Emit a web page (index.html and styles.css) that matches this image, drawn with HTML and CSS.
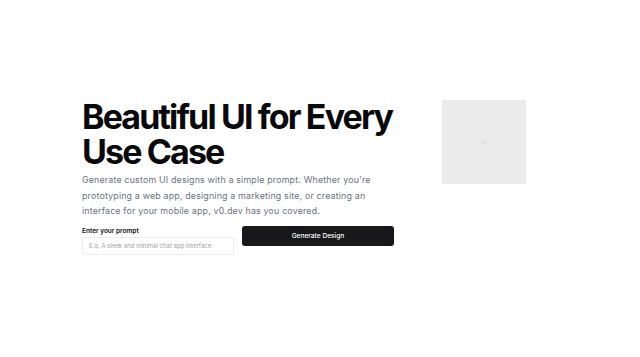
FILE: index.html
```html
<!DOCTYPE html>
<html lang="en">

<head>
    <meta charset="UTF-8">
    <meta name="viewport" content="width=device-width, initial-scale=1.0">
    <title>Beautiful UI for Every Use Case</title>
    <link rel="stylesheet" href="styles.css">
</head>

<body>
    <main class="hero">
        <!-- Texto e formulário -->
        <section class="hero-text">
            <h1>Beautiful UI for Every<br>Use Case</h1>
            <p class="lead">Generate custom UI designs with a simple prompt. Whether you're prototyping a web app, designing a marketing site, or creating an interface for your mobile app, v0.dev has you covered.</p>

            <form class="prompt-form" onsubmit="return false">
                <div class="field">
                    <label for="prompt">Enter your prompt</label>
                    <input type="text" id="prompt" placeholder="E.g. A sleek and minimal chat app interface">
                </div>
                <button type="submit">Generate Design</button>
            </form>
        </section>

        <!-- Imagem de exemplo -->
        <div class="hero-image">
            <div class="placeholder">
                <svg width="8" height="8" viewBox="0 0 8 8" fill="none" stroke="#dcdcdc" stroke-width="1">
                    <circle cx="4" cy="4" r="2"/>
                </svg>
            </div>
        </div>
    </main>
</body>

</html>
```

FILE: styles.css
```css
* {
    box-sizing: border-box;
}

body {
    margin: 0;
    font-family: Inter, "Noto Sans", sans-serif;
    color: #0a0a0a;
    background: #fff;
}

.hero {
    min-height: 357px;
    padding-bottom: 3px;
    display: grid;
    grid-template-columns: 320px 116px;
    column-gap: 40px;
    justify-content: center;
    align-content: center;
    align-items: start;
}

h1 {
    margin: 0;
    font-size: 34px;
    line-height: 35px;
    font-weight: 700;
    letter-spacing: -0.055em;
    color: #09090b;
    white-space: nowrap;
}

.lead {
    margin: 3px 0 0;
    font-size: 8.85px;
    line-height: 15.5px;
    letter-spacing: 0.02em;
    color: #6b7280;
    max-width: 300px;
}

.prompt-form {
    margin-top: 7px;
    display: grid;
    grid-template-columns: 152px 152px;
    column-gap: 8px;
    align-items: start;
}

.field label {
    display: block;
    font-size: 6.5px;
    font-weight: 600;
    line-height: 8px;
    margin-top: 1px;
    color: #111;
}

.field input {
    display: block;
    width: 100%;
    height: 18px;
    margin-top: 2px;
    padding: 0 6px;
    font-family: inherit;
    font-size: 6px;
    border: 1px solid #ededed;
    border-radius: 3px;
    color: #111;
}

.field input::placeholder {
    color: #a1a1aa;
}

button {
    height: 20px;
    background-color: #18181b;
    color: #fff;
    font-family: inherit;
    font-size: 6.6px;
    font-weight: 500;
    border: none;
    border-radius: 3px;
    cursor: pointer;
}

.hero-image {
    padding-top: 1px;
}

.placeholder {
    width: 84px;
    height: 84px;
    background-color: #ebebeb;
    display: flex;
    align-items: center;
    justify-content: center;
}
```
